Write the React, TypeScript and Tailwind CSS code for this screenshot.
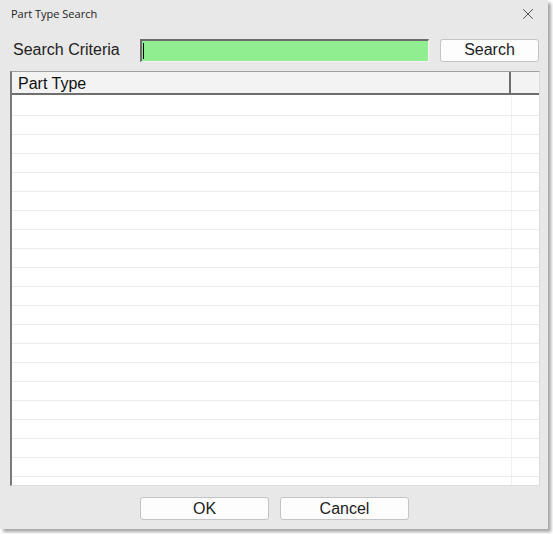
import { X } from "lucide-react";

const rows = Array.from({ length: 21 }, (_, i) => i);

export default function App() {
  return (
    <div className="w-[553px] h-[534px] bg-white" style={{ fontFamily: '"Liberation Sans", Arial, sans-serif' }}>
      <div className="w-[548px] h-[529px] bg-[#e8e8e8] shadow-[3px_3px_3px_rgba(0,0,0,0.35)] flex flex-col">
        {/* title bar */}
        <div className="h-[28px] flex items-center justify-between pl-[11px] pr-[11px]">
          <span className="text-[11px] text-[#222]" style={{ fontFamily: '"Open Sans", "Noto Sans", sans-serif' }}>
            Part Type Search
          </span>
          <X size={18} strokeWidth={1.1} className="text-[#333]" />
        </div>

        {/* search row */}
        <div className="mt-[10px] h-[24px] flex items-center pl-[13px]">
          <span className="w-[127px] text-[16px] text-[#222]">Search Criteria</span>
          <div className="w-[289px] h-[23px] bg-[#90ee90] border-t-2 border-l-2 border-t-[#6b6b6b] border-l-[#6b6b6b] border-b border-r border-b-[#f4f4f4] border-r-[#f4f4f4] flex items-center pl-[1px]">
            <div className="w-[1px] h-[16px] bg-black" />
          </div>
          <button className="ml-[11px] w-[99px] h-[23px] bg-[#fdfdfd] border border-[#c4c4c4] rounded-[3px] text-[16px] text-[#222] leading-none">
            Search
          </button>
        </div>

        {/* table */}
        <div className="mt-[9px] ml-[10px] w-[530px] h-[415px] bg-white border-l-2 border-t border-l-[#7a7a7a] border-t-[#a0a0a0] border-r border-b border-r-[#dcdcdc] border-b-[#dcdcdc] overflow-hidden flex flex-col">
          <div className="h-[23px] flex bg-[#f3f3f3] border-b-2 border-b-[#6e6e6e] shrink-0">
            <div className="w-[499px] border-r-2 border-r-[#6e6e6e] text-[16px] text-[#111] pl-[6px] pt-[2px] leading-[20px]">
              Part Type
            </div>
            <div className="flex-1" />
          </div>
          <div className="flex-1 flex flex-col pt-[2px]">
            {rows.map((r) => (
              <div key={r} className="h-[19px] shrink-0 flex border-b border-b-[#ececec]">
                <div className="w-[500px] border-r border-r-[#f0f0f0]" />
                <div className="flex-1" />
              </div>
            ))}
          </div>
        </div>

        {/* buttons */}
        <div className="mt-[11px] flex pl-[140px] gap-[11px]">
          <button className="w-[129px] h-[23px] bg-[#fdfdfd] border border-[#c4c4c4] rounded-[3px] text-[16px] text-[#222] leading-none pt-[1px]">
            OK
          </button>
          <button className="w-[129px] h-[23px] bg-[#fdfdfd] border border-[#c4c4c4] rounded-[3px] text-[16px] text-[#222] leading-none pt-[1px]">
            Cancel
          </button>
        </div>
      </div>
    </div>
  );
}
